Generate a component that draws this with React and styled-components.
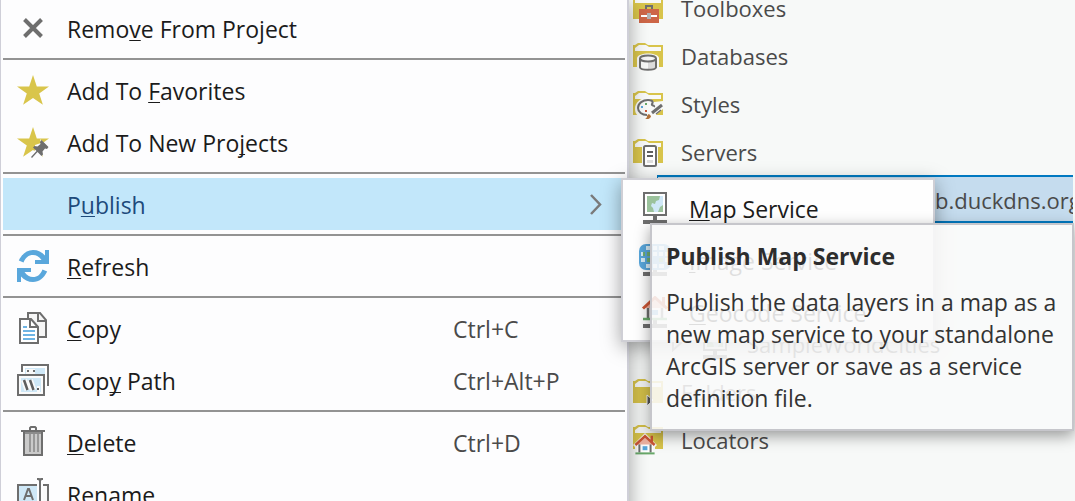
import React from "react";
import styled, { createGlobalStyle, css } from "styled-components";

const GlobalStyle = createGlobalStyle`
  *, *::before, *::after { box-sizing: border-box; }
  body { margin: 0; background: #f7f9f8; }
  body, button { font-family: "Open Sans", "Noto Sans", sans-serif; font-size: 23px; line-height: 32px; }
`;

const Screen = styled.main`
  display: flex;
  height: 100vh;
  overflow: hidden;
`;

const ContextMenu = styled.nav`
  position: relative;
  z-index: 1;
  flex: none;
  align-self: flex-start;
  width: 629px;
  min-height: 100vh;
  padding: 2px;
  border: solid #cfcfd8;
  border-width: 0 2px 0 1px;
  background: #fdfdfe;
  box-shadow: 2px 4px 16px rgba(0, 0, 0, 0.3);
`;

const MenuRow = styled.button`
  display: grid;
  grid-template-columns: 32px 1fr ${(p) => (p.$compact ? "0" : "172px")};
  column-gap: 18px;
  align-items: center;
  width: 100%;
  height: 52px;
  padding: 0 0 0 14px;
  border: 0;
  background: ${(p) => (p.$active ? "#c2e7fa" : "transparent")};
  color: ${(p) => (p.$active ? "#1d4a7a" : "#1b1b1b")};
  text-align: left;
  white-space: nowrap;

  svg { display: block; }
`;

const Label = styled.span`
  padding-top: 2px;
`;

const Shortcut = styled.span`
  padding-top: 2px;
  color: #4a4a4a;
`;

const AccessKey = styled.u`
  text-decoration-thickness: 1px;
  text-underline-offset: 2px;
  text-decoration-skip-ink: none;
`;

const Separator = styled.hr`
  height: 2px;
  margin: 4px 0;
  border: 0;
  background: #939393;
`;

const SubmenuAnchor = styled.div`
  position: relative;
`;

const Submenu = styled.div`
  position: absolute;
  top: 0;
  left: calc(100% - 4px);
  width: 314px;
  padding: 2px;
  border: 2px solid #cfcfd5;
  background: #fefefe;
  box-shadow: 0 5px 18px rgba(0, 0, 0, 0.36);
`;

const ChevronSlot = styled.span`
  display: flex;
  justify-content: flex-end;
  padding-right: 22px;
`;

const Tooltip = styled.div`
  position: absolute;
  top: 43px;
  left: 27px;
  width: 424px;
  padding: 15px 12px 15px 14px;
  border: 2px solid #c6c6cb;
  background: rgba(249, 249, 249, 0.88);
  box-shadow: 0 5px 14px rgba(0, 0, 0, 0.38);
  color: #333;
`;

const TooltipTitle = styled.strong`
  display: block;
  margin-bottom: 14px;
  color: #2d2d2d;
`;

const TooltipText = styled.p`
  margin: 0;
`;

const CatalogPane = styled.aside`
  flex: 1;
  min-width: 0;
  margin-top: -17px;
  padding: 0 2px 0 4px;
  overflow: hidden;
  color: #4a4a4a;
  font-size: 22px;
`;

const Tree = styled.ul`
  margin: 0;
  padding: 0;
  list-style: none;
`;

const treeRow = css`
  display: flex;
  align-items: center;
  gap: 16px;
  height: 48px;
  white-space: nowrap;

  svg { flex: none; }
`;

const TreeRow = styled.li`
  ${treeRow}
`;

const TreeLabel = styled.span`
  padding-top: 2px;
`;

const SelectedServer = styled.li`
  ${treeRow}
  margin-left: 24px;
  padding-left: 277px;
  overflow: hidden;
  border: solid #0079c1;
  border-width: 2px 0 2px 1px;
  background: #c5dcee;
`;

const ServiceRow = styled.li`
  ${treeRow}
  margin-top: 96px;
  padding-left: 38px;
`;

const Icon = ({ children, w = 32, h = 32 }) => (
  <svg width={w} height={h} viewBox={`0 0 ${w} ${h}`} fill="none" aria-hidden="true">
    {children}
  </svg>
);

const RemoveIcon = () => (
  <Icon>
    <path d="M7.500 7.500l17 17M24.500 7.500l-17 17" stroke="#6e6e6e" strokeWidth="4" />
  </Icon>
);

const STAR = "M16 1l3.800 11.600H32l-9.800 7 3.700 11.200L16 24l-9.900 6.800L9.800 19.600 0 12.600h12.200z";

const StarIcon = () => (
  <Icon>
    <path d={STAR} fill="#d9c54b" />
  </Icon>
);

const PinnedStarIcon = () => (
  <Icon>
    <path d={STAR} fill="#d9c54b" />
    <path d="M23 13l9 9-2 4-3-1-2 5h-4l-6 2v-4l3-4v-5l6-2z" fill="#fdfdfe" />
    <path d="M24.500 14l7 7-1.500 2-2-.500-2.500 3 .500 3-1.500 1.500-4-4L15 32l-1-1 5.500-6-3.500-3.500 1.500-1.500 3 .500 3-2.500-.500-2z" fill="#6e6e6e" />
  </Icon>
);

const RefreshIcon = () => {
  const half = "M1.800 10.500C5 3.800 10 0 16 0c5 0 9 2 12 5.500V0h4v14H18v-4h6.500C22 6.500 19.500 5 16 5c-4.500 0-7.500 2.500-9.500 7.500z";
  return (
    <Icon>
      <path d={half} fill="#59a7dc" />
      <path d={half} fill="#59a7dc" transform="rotate(180 16 16)" />
    </Icon>
  );
};

const CopyIcon = () => (
  <Icon>
    <path d="M11 1h12l6 7v17H11z" fill="#f6f6f6" stroke="#6e6e6e" strokeWidth="2" />
    <path d="M21 1v8h8" stroke="#6e6e6e" strokeWidth="2" />
    <path d="M3 7h11l7 8v16H3z" fill="#fff" stroke="#6e6e6e" strokeWidth="2" />
    <path d="M13 7v8h8" stroke="#6e6e6e" strokeWidth="2" />
    <path d="M6 15h4M6 19h12M6 23h12M6 27h12" stroke="#6db4e4" strokeWidth="2" />
  </Icon>
);

const CopyPathIcon = () => (
  <Icon>
    <path d="M5 8V1h26v21" fill="#fff" stroke="#6e6e6e" strokeWidth="2" />
    <path d="M18 4h10v6H8V4h4z" fill="#cfe8f7" />
    <path d="M9 5h9v5H9z" fill="#f8f8f8" />
    <path d="M10 7h2M16 7h2" stroke="#6e6e6e" strokeWidth="2" />
    <path d="M1 11h26v20H1z" fill="#fafafa" stroke="#6e6e6e" strokeWidth="2" />
    <path d="M4 14h20v14H4z" fill="#cfe8f7" />
    <path d="M7 16l3.500 10M13 16l3.500 10M20 25h3" stroke="#fafafa" strokeWidth="6" />
    <path d="M7 16l3.500 10M13 16l3.500 10" stroke="#5f5f5f" strokeWidth="2.500" />
    <path d="M20 24h2v2h-2z" fill="#5f5f5f" />
  </Icon>
);

const DeleteIcon = () => (
  <Icon>
    <path d="M13 5V2l1-1h4l1 1v3" stroke="#6e6e6e" strokeWidth="2" />
    <path d="M7 6h18v23H7z" fill="#cacaca" stroke="#6e6e6e" strokeWidth="2" />
    <path d="M8 7h16" stroke="#8c8c8c" strokeWidth="2" />
    <path d="M13 8v18M17 8v18M21 8v18" stroke="#989898" strokeWidth="2" />
    <path d="M4 5h24" stroke="#6e6e6e" strokeWidth="2" />
  </Icon>
);

const RenameIcon = () => (
  <Icon>
    <path d="M1 7h30v20H1z" fill="#fafafa" stroke="#6e6e6e" strokeWidth="2" />
    <path d="M2 8h18v18H2z" fill="#cfe8f7" />
    <path d="M20 0h6v32h-6z" fill="#fdfdfe" />
    <path d="M20 1h2l1 2 1-2h2M23 2v28" stroke="#6e6e6e" strokeWidth="2" />
    <path d="M7 22l4-11h1l4 11M8 18h7" stroke="#6e6e6e" strokeWidth="2" />
  </Icon>
);

const ChevronIcon = () => (
  <Icon w={14} h={24}>
    <path d="M2 3l9 9.500L2 22" stroke="#7a7a7a" strokeWidth="2.500" />
  </Icon>
);

const Stand = () => <path d="M14 24h4v4h10v4H4v-4h10z" fill="#6e6e6e" />;

const MapServiceIcon = () => (
  <Icon>
    <Stand />
    <path d="M5 1h22v22H5z" fill="#fff" stroke="#6e6e6e" strokeWidth="2" />
    <path d="M8 4h16v16H8z" fill="#9bc29c" />
    <path d="M21 4h3v9l-3 2-2 5h-4l-1-4-2-2 1-3 3 1 1-3 3-1z" fill="#cfe8f7" />
  </Icon>
);

const ImageServiceIcon = () => (
  <Icon>
    <Stand />
    <rect width="32" height="26" rx="7" fill="#59a7dc" />
    <path d="M7 2h4v4H7zM2 8h4v4H2zM2 14h4v4H2zM8 14h4v4H8zM7 20h4v4H7zM14 2h4v4h-4zM20 2h5v4h-5zM20 8h4v4h-4zM26 8h4v4h-4zM14 8h4v4h-4zM20 14h4v4h-4zM26 14h4v4h-4zM14 20h4v4h-4zM20 20h5v4h-5z" fill="#d7edf8" />
    <path d="M4 8h2v4H4zM8 8h4v4H8zM8 14h4v4H8zM20 14h4v4h-4z" fill="#6fae72" />
  </Icon>
);

const House = () => (
  <>
    <path d="M6 10h20v12H6z" fill="#fff" />
    <path d="M9 11v11M23 11v11" stroke="#6e6e6e" strokeWidth="2.500" />
    <path d="M6 12L16 2l10 10z" fill="#efb3a2" />
    <path d="M4 12.500L16 1.500l12 11M24.500 1v9" stroke="#cc5635" strokeWidth="3" />
    <path d="M13 14h6v5h-6z" fill="#59a7dc" />
    <path d="M4 23h24" stroke="#67a869" strokeWidth="2.500" />
  </>
);

const GeocodeServiceIcon = () => (
  <Icon>
    <Stand />
    <House />
  </Icon>
);

const FolderIcon = ({ children, raised }) => (
  <Icon>
    <g transform={raised ? "translate(0 -2)" : undefined}>
      <path d="M0 6h2l3-2h7l3 2h15v22H0z" fill="#d8c44b" />
      <path d="M2 12V9l4-3h7l3 2h12v4z" fill="#f8f9f8" />
    </g>
    {children}
  </Icon>
);

const ToolboxBadge = () => (
  <>
    <path d="M13 19v-4h6v4" stroke="#6e6e6e" strokeWidth="2" />
    <path d="M6 18h20v14H6z" fill="#cd6647" />
    <path d="M8 25h16" stroke="#fff" strokeWidth="2" />
    <path d="M14 22h4v6h-4z" fill="#b2b2b2" />
  </>
);

const DatabaseBadge = () => (
  <>
    <path d="M4 19c1-6 21-6 22 0v10c-1 5-21 5-22 0z" fill="#f8f9f8" />
    <path d="M15 23h8v6c-2 2-5 2-8 2z" fill="#dcdcdc" />
    <path d="M7 19.500v9c1 3 15 3 16 0v-9" stroke="#6e6e6e" strokeWidth="2" />
    <ellipse cx="15" cy="19.500" rx="8" ry="3" fill="#f4f4f4" stroke="#6e6e6e" strokeWidth="2" />
  </>
);

const PaletteBadge = () => (
  <>
    <path d="M2 22c0-7 7-12 14-11l5 4 9-1v8L18 32h-7c-6-2-9-5-9-10z" fill="#f8f9f8" />
    <path d="M14 28c-5 0-9-3-9-7 0-5 5-8 10-8 3 0 6 1 4 4-1 2 3 1 2 3" stroke="#6e6e6e" strokeWidth="2" />
    <path d="M8 19h2v2H8z" fill="#59a7dc" />
    <path d="M12 16h2v2h-2z" fill="#67a869" />
    <path d="M12 23h2v2h-2z" fill="#cc5635" />
    <path d="M29 18l-10 8" stroke="#6e6e6e" strokeWidth="3" />
    <path d="M28 23l-5 4" stroke="#6e6e6e" strokeWidth="1.500" />
    <path d="M12 32c3-1 1-4 4-5l2 2c0 2-3 4-6 3z" fill="#b0713a" />
  </>
);

const ServerBadge = () => (
  <>
    <rect x="9" y="9" width="16" height="23" rx="3" fill="#f8f9f8" />
    <rect x="11" y="11" width="12" height="20" rx="1.500" fill="#fff" stroke="#6e6e6e" strokeWidth="2" />
    <path d="M14 17h6M14 21h6" stroke="#5f5f5f" strokeWidth="2" />
    <path d="M14 25h6v3h-6z" fill="#dedede" />
  </>
);

const LinkBadge = () => <path d="M14 20l6 5-6 6z" fill="#555" stroke="#f8f9f8" />;

const LocatorBadge = () => (
  <>
    <path d="M0 22L12 10l12 12-2 2v8H2v-8z" fill="#f8f9f8" />
    <g transform="translate(-.800 12) scale(.800)">
      <House />
    </g>
  </>
);

const TreeArrow = () => (
  <Icon w={12} h={20}>
    <path d="M2 3l8 7-8 7z" stroke="#8a8a8a" strokeWidth="2" />
  </Icon>
);

/* The letter after "&" is the access key of the label. */
const renderLabel = (text) => {
  const at = text.indexOf("&");
  return (
    <>
      {text.slice(0, at)}
      <AccessKey>{text[at + 1]}</AccessKey>
      {text.slice(at + 2)}
    </>
  );
};

const Item = ({ icon, text, shortcut, compact }) => (
  <MenuRow type="button" $compact={compact}>
    {icon}
    <Label>{renderLabel(text)}</Label>
    {shortcut && <Shortcut>{shortcut}</Shortcut>}
  </MenuRow>
);

export default function App() {
  return (
    <>
      <GlobalStyle />
      <Screen>
        <ContextMenu aria-label="Server actions">
          <Item icon={<RemoveIcon />} text="Remo&ve From Project" />
          <Separator />
          <Item icon={<StarIcon />} text="Add To &Favorites" />
          <Item icon={<PinnedStarIcon />} text="Add To New Pro&jects" />
          <Separator />
          <SubmenuAnchor>
            <MenuRow type="button" $active aria-haspopup="true" aria-expanded="true">
              <span />
              <Label>{renderLabel("P&ublish")}</Label>
              <ChevronSlot>
                <ChevronIcon />
              </ChevronSlot>
            </MenuRow>
            <Submenu>
              <Item compact icon={<MapServiceIcon />} text="&Map Service" />
              <Item compact icon={<ImageServiceIcon />} text="&Image Service" />
              <Item compact icon={<GeocodeServiceIcon />} text="&Geocode Service" />
              <Tooltip role="tooltip">
                <TooltipTitle>Publish Map Service</TooltipTitle>
                <TooltipText>
                  Publish the data layers in a map as a new map service to your standalone ArcGIS
                  server or save as a service definition file.
                </TooltipText>
              </Tooltip>
            </Submenu>
          </SubmenuAnchor>
          <Separator />
          <Item icon={<RefreshIcon />} text="&Refresh" />
          <Separator />
          <Item icon={<CopyIcon />} text="&Copy" shortcut="Ctrl+C" />
          <Item icon={<CopyPathIcon />} text="Cop&y Path" shortcut="Ctrl+Alt+P" />
          <Separator />
          <Item icon={<DeleteIcon />} text="&Delete" shortcut="Ctrl+D" />
          <Item icon={<RenameIcon />} text="Rena&me" />
        </ContextMenu>
        <CatalogPane aria-label="Catalog">
          <Tree>
            <TreeRow>
              <FolderIcon><ToolboxBadge /></FolderIcon>
              <TreeLabel>Toolboxes</TreeLabel>
            </TreeRow>
            <TreeRow>
              <FolderIcon><DatabaseBadge /></FolderIcon>
              <TreeLabel>Databases</TreeLabel>
            </TreeRow>
            <TreeRow>
              <FolderIcon><PaletteBadge /></FolderIcon>
              <TreeLabel>Styles</TreeLabel>
            </TreeRow>
            <TreeRow>
              <FolderIcon><ServerBadge /></FolderIcon>
              <TreeLabel>Servers</TreeLabel>
            </TreeRow>
            <SelectedServer>
              <TreeLabel>b.duckdns.org</TreeLabel>
            </SelectedServer>
            <ServiceRow>
              <TreeArrow />
              <MapServiceIcon />
              <TreeLabel>SampleWorldCities</TreeLabel>
            </ServiceRow>
            <TreeRow>
              <FolderIcon><LinkBadge /></FolderIcon>
              <TreeLabel>Folders</TreeLabel>
            </TreeRow>
            <TreeRow>
              <FolderIcon raised><LocatorBadge /></FolderIcon>
              <TreeLabel>Locators</TreeLabel>
            </TreeRow>
          </Tree>
        </CatalogPane>
      </Screen>
    </>
  );
}
